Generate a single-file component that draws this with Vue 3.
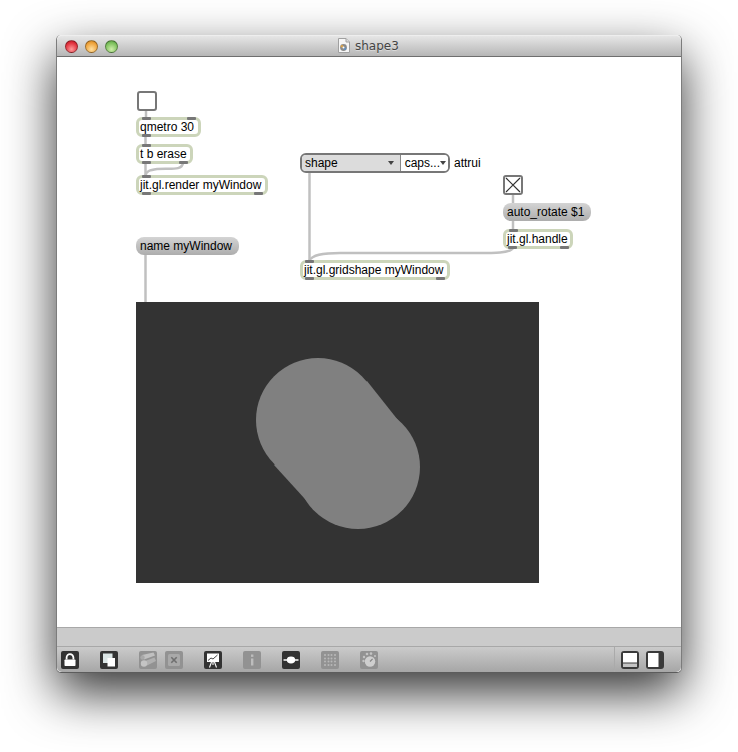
<template>
  <div class="page">
    <div class="window">
      <header class="titlebar">
        <div class="lights">
          <span class="light red"></span>
          <span class="light amber"></span>
          <span class="light green"></span>
        </div>
        <div class="title">
          <svg width="13" height="15" viewBox="0 0 13 15">
            <path d="M1.5 .5H9L12.5 4V14.5H1.5Z" fill="#f6f6f6" stroke="#a0a0a0" />
            <path d="M9 .5V4H12.5" fill="#ddd" stroke="#a0a0a0" />
            <circle cx="6.5" cy="9.5" r="3.4" fill="#8a8a8a" />
            <circle cx="5" cy="8.2" r="1.3" fill="#d9a24a" />
            <circle cx="8" cy="10.8" r="1.3" fill="#5f8fc0" />
            <circle cx="6.5" cy="9.5" r="1" fill="#fff" />
          </svg>
          <span>shape3</span>
        </div>
      </header>

      <main class="canvas">
        <svg class="wires" width="624" height="570" viewBox="57 57 624 570">
          <path v-for="(d, i) in wires" :key="i" :d="d" />
        </svg>

        <template v-for="o in objects" :key="o.id">
          <div :class="['obj', o.kind]" :style="boxStyle(o)">
            <span v-if="o.text" class="label">{{ o.text }}</span>
            <svg v-if="o.kind === 'toggle'" class="cross" width="16" height="16" viewBox="0 0 16 16">
              <path d="M1 1L15 15M15 1L1 15" />
            </svg>
            <i v-for="p in o.ports" :key="p[0] + p[1]" :class="['port', p[0]]" :style="{ left: p[1] + 'px' }"></i>
          </div>
        </template>

        <div class="menu">
          <div class="menu-part grey">
            <span>shape</span><b class="arrow"></b>
          </div>
          <div class="menu-part white">
            <span>caps...</span><b class="arrow"></b>
          </div>
        </div>
        <span class="attrui">attrui</span>

        <div class="render">
          <svg width="403" height="281" viewBox="136 302 403 281" fill="#808080">
            <circle cx="318" cy="420" r="62" />
            <circle cx="358" cy="467" r="62" />
            <path d="M367 381L409 434L315 510L274 465Z" />
          </svg>
        </div>
      </main>

      <div class="band"></div>

      <footer class="toolbar">
        <div class="tools">
          <svg class="tile on" viewBox="0 0 18 18">
            <path d="M5.6 8.5V6.5a3.4 3.4 0 0 1 6.8 0V8.5" fill="none" stroke="#fff" stroke-width="1.8" />
            <rect x="3.5" y="8.5" width="11" height="6.5" rx=".8" fill="#fff" />
          </svg>
          <svg class="tile on" viewBox="0 0 18 18">
            <rect x="3" y="2.5" width="9.5" height="9.5" fill="#dbe6e6" />
            <rect x="7.5" y="7" width="7.5" height="8.5" fill="#fff" />
          </svg>
          <div class="pair">
            <svg class="tile off" viewBox="0 0 18 18">
              <path d="M3 4L14.5 1.5L16 4.5L5 8.5Z" fill="#c0c0c0" />
              <path d="M6 10L15.5 6.5L17 10L8 14.5Z" fill="#b0b0b0" />
              <circle cx="5" cy="12.5" r="3.2" fill="#c4c4c4" />
              <circle cx="3.5" cy="6.5" r="2.2" fill="#a8a8a8" />
            </svg>
            <svg class="tile off" viewBox="0 0 18 18">
              <rect x="3" y="3" width="12" height="12" rx="1.5" fill="#a9a9a9" />
              <path d="M6.3 6.3L11.7 11.7M11.7 6.3L6.3 11.7" stroke="#6f6f6f" stroke-width="1.6" />
            </svg>
          </div>
          <svg class="tile on" viewBox="0 0 18 18">
            <rect x="3" y="2.5" width="12" height="8.5" fill="#fff" />
            <path d="M4 9.5L7 7L9 8L13.5 4" fill="none" stroke="#444" stroke-width="1" />
            <path d="M7.5 11L5.5 16.5M10.5 11L12.5 16.5M9 11V14" stroke="#fff" stroke-width="1.1" />
          </svg>
          <svg class="tile off" viewBox="0 0 18 18">
            <rect x="8" y="3.5" width="2.4" height="2.4" fill="#bdbdbd" />
            <rect x="8" y="7.5" width="2.4" height="7" fill="#bdbdbd" />
          </svg>
          <svg class="tile on" viewBox="0 0 18 18">
            <path d="M1.5 9H16.5" stroke="#fff" stroke-width="1.4" />
            <ellipse cx="9" cy="9" rx="4.2" ry="3.4" fill="#fff" />
          </svg>
          <svg class="tile off" viewBox="0 0 18 18">
            <g fill="#b8b8b8">
              <circle v-for="c in gridDots" :key="c[0] + '-' + c[1]" :cx="c[0]" :cy="c[1]" r="1" />
            </g>
          </svg>
          <svg class="tile off" viewBox="0 0 18 18">
            <circle cx="10" cy="10.5" r="5.2" fill="#cfcfcf" />
            <path d="M10 10.5L12.6 7.8" stroke="#858585" stroke-width="1.2" />
            <g fill="#c4c4c4">
              <circle cx="3.5" cy="10" r="1.2" />
              <circle cx="4" cy="6" r="1.2" />
              <circle cx="7" cy="3" r="1.3" />
              <circle cx="11" cy="2.6" r="1.3" />
              <circle cx="15" cy="5" r="1" />
            </g>
          </svg>
        </div>
        <div class="panes">
          <svg class="pane" viewBox="0 0 18 18">
            <rect x="1" y="1" width="16" height="16" rx="2" fill="#3a3a3a" stroke="#3a3a3a" stroke-width="2" />
            <rect x="2" y="2" width="14" height="9.5" fill="#fff" />
            <rect x="2" y="12.5" width="14" height="3.5" fill="#c4c4c4" />
          </svg>
          <svg class="pane" viewBox="0 0 18 18">
            <rect x="1" y="1" width="16" height="16" rx="2" fill="#3a3a3a" stroke="#3a3a3a" stroke-width="2" />
            <rect x="2" y="2" width="10.5" height="14" fill="#fff" />
          </svg>
        </div>
      </footer>
    </div>
  </div>
</template>

<script setup>
const objects = [
  { id: 'bang', kind: 'toggle empty', x: 137, y: 91, w: 20, h: 20 },
  { id: 'qmetro', kind: 'box', x: 136, y: 117, w: 65, h: 20, text: 'qmetro 30', ports: [['top', 6], ['top', 51], ['bottom', 6]] },
  { id: 'trigger', kind: 'box', x: 136, y: 144, w: 57, h: 20, text: 't b erase', ports: [['top', 6], ['bottom', 6], ['bottom', 43]] },
  { id: 'render', kind: 'box', x: 136, y: 175, w: 132, h: 20, text: 'jit.gl.render myWindow', ports: [['top', 6], ['bottom', 6], ['bottom', 118]] },
  { id: 'name', kind: 'msg', x: 136, y: 237, w: 103, h: 18, text: 'name myWindow' },
  { id: 'toggle', kind: 'toggle', x: 503, y: 175, w: 20, h: 20 },
  { id: 'autorotate', kind: 'msg', x: 503, y: 203, w: 88, h: 18, text: 'auto_rotate $1' },
  { id: 'handle', kind: 'box', x: 503, y: 229, w: 70, h: 20, text: 'jit.gl.handle', ports: [['top', 6], ['bottom', 5], ['bottom', 57]] },
  { id: 'gridshape', kind: 'box', x: 300, y: 260, w: 150, h: 20, text: 'jit.gl.gridshape myWindow', ports: [['top', 5], ['bottom', 5], ['bottom', 136]] },
]

const wires = [
  'M146 111V117',
  'M145.5 136V145',
  'M145.5 163V176',
  'M183 163C182 171 170 168 157 169C150 170 146 171 145.5 176',
  'M145.5 255V302',
  'M309.5 172V261',
  'M513 194V204',
  'M513 220V230',
  'M513 248C510 254 490 253 460 253L340 253C322 253 312 255 309 261',
]

const gridDots = [4, 7.5, 10.5, 14].flatMap((x) => [4, 7.5, 10.5, 14].map((y) => [x, y]))

// positions are written in page coordinates, the canvas starts at 57,57
function boxStyle(o) {
  return {
    left: o.x - 57 + 'px',
    top: o.y - 57 + 'px',
    width: o.w + 'px',
    height: o.h + 'px',
  }
}
</script>

<style>
html,
body {
  margin: 0;
  background: #fff;
  overflow: hidden;
}
</style>

<style scoped>
.page {
  width: 738px;
  height: 752px;
  padding: 35px 0 0 56px;
  box-sizing: border-box;
  overflow: hidden;
  font-family: "Liberation Sans", Arial, sans-serif;
}

.window {
  width: 626px;
  height: 638px;
  display: flex;
  flex-direction: column;
  box-sizing: border-box;
  border: 1px solid #7c7c7c;
  border-top: 0;
  border-bottom-color: #5c5c5c;
  border-radius: 5px;
  background: #fff;
  box-shadow: 0 20px 50px rgba(0, 0, 0, 0.8);
}

.titlebar {
  height: 22px;
  flex: none;
  position: relative;
  display: flex;
  align-items: center;
  box-sizing: border-box;
  border-bottom: 1px solid #6e6e6e;
  border-top: 1px solid #eee;
  border-radius: 5px 5px 0 0;
  background: linear-gradient(#e6e6e6, #b6b6b6);
}

.lights {
  display: flex;
  gap: 7px;
  margin-left: 8px;
}

.light {
  width: 13px;
  height: 13px;
  border-radius: 50%;
  box-sizing: border-box;
  border: 1px solid rgba(0, 0, 0, 0.35);
}

.red {
  background: radial-gradient(circle at 50% 75%, #ff9a9a, #e0303c 65%, #b01822);
}

.amber {
  background: radial-gradient(circle at 50% 75%, #ffe0a0, #eea23a 65%, #c07a1c);
}

.green {
  background: radial-gradient(circle at 50% 75%, #cfeeaa, #7cc05c 65%, #4c8c38);
}

.title {
  position: absolute;
  left: 280px;
  top: 2px;
  display: flex;
  align-items: center;
  gap: 5px;
  font-family: "DejaVu Sans", sans-serif;
  font-size: 12px;
  color: #444;
  text-shadow: 0 1px 0 rgba(255, 255, 255, 0.4);
}

.canvas {
  position: relative;
  flex: none;
  height: 570px;
  overflow: hidden;
  background: #fff;
}

.wires {
  position: absolute;
  left: 0;
  top: 0;
}

.wires path {
  fill: none;
  stroke: #c0c0c0;
  stroke-width: 2.5;
}

.obj {
  position: absolute;
  box-sizing: border-box;
  font-size: 12px;
  color: #000;
  white-space: nowrap;
}

.box {
  border: 3px solid #ccd5ba;
  border-radius: 6px;
  background: #fff;
  line-height: 14px;
}

.box .label {
  margin-left: 1px;
}

.msg {
  border-radius: 8px;
  background: linear-gradient(#d4d4d4, #adadad);
  line-height: 18px;
}

.msg .label {
  margin-left: 4px;
}

.toggle {
  border: 2px solid #777;
  border-radius: 3px;
  background: #fff;
}

.cross {
  display: block;
}

.cross path {
  stroke: #333;
  stroke-width: 1.2;
  fill: none;
}

.toggle.empty .cross {
  display: none;
}

.port {
  position: absolute;
  width: 9px;
  height: 3px;
  margin-left: -3px;
  border-radius: 1px;
  background: #777;
}

.port.top {
  top: -3px;
}

.port.bottom {
  bottom: -3px;
}

.menu {
  position: absolute;
  left: 243px;
  top: 96px;
  width: 150px;
  height: 20px;
  display: flex;
  box-sizing: border-box;
  border: 2.5px solid #777;
  border-radius: 6px;
  overflow: hidden;
  font-size: 12px;
  line-height: 15px;
}

.menu-part {
  display: flex;
  align-items: center;
  justify-content: space-between;
  box-sizing: border-box;
  padding: 0 2px 0 3px;
}

.menu-part.grey {
  width: 99px;
  padding-right: 6px;
  background: #dcdcdc;
  border-right: 1px solid #888;
}

.menu-part.white {
  flex: 1;
  padding-left: 4px;
  background: #fff;
}

.arrow {
  width: 0;
  height: 0;
  border-left: 3px solid transparent;
  border-right: 3px solid transparent;
  border-top: 4px solid #444;
}

.attrui {
  position: absolute;
  left: 397px;
  top: 99px;
  font-size: 12px;
  line-height: 14px;
}

.render {
  position: absolute;
  left: 79px;
  top: 245px;
  width: 403px;
  height: 281px;
  background: #333;
}

.render svg {
  display: block;
}

.band {
  flex: none;
  height: 18px;
  border-top: 1px solid #a8a8a8;
  border-bottom: 1px solid #a8a8a8;
  background: #cbcbcb;
}

.toolbar {
  flex: 1;
  display: flex;
  align-items: center;
  justify-content: space-between;
  box-sizing: border-box;
  padding: 0 17px 0 4px;
  background: linear-gradient(#cbcbcb, #a6a6a6);
  border-radius: 0 0 5px 5px;
}

.tools {
  display: flex;
  gap: 21px;
}

.pair {
  display: flex;
  gap: 8px;
}

.tile {
  display: block;
  width: 18px;
  height: 18px;
  border-radius: 2px;
}

.tile.on {
  background: #333;
}

.tile.off {
  background: #929292;
}

.panes {
  display: flex;
  gap: 7px;
  height: 25px;
  align-items: center;
  padding-left: 6px;
  border-left: 1px solid #aaa;
}

.pane {
  display: block;
  width: 18px;
  height: 18px;
}
</style>
